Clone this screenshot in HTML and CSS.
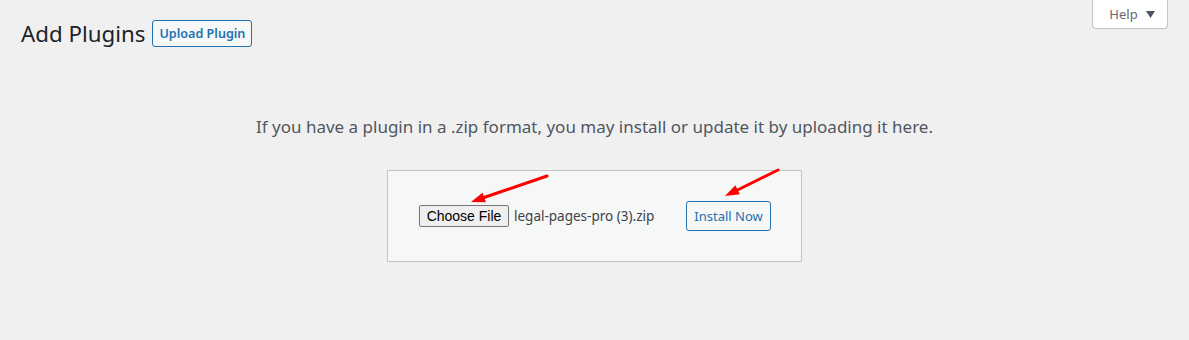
FILE: index.html
```html
<!DOCTYPE html>
<html lang="en">
<head>
  <meta charset="UTF-8" />
  <title>Add Plugins</title>
  <link rel="stylesheet" href="styles.css">
</head>
<body>
  <div class="wrap">
    <button class="help-tab">Help
      <svg class="caret" width="9" height="7" viewBox="0 0 9 7"><polygon points="0,0 9,0 4.5,7" fill="#50575e"/></svg>
    </button>
    <div class="title-row">
      <h1 class="page-title">Add Plugins</h1>
      <button class="title-action">Upload Plugin</button>
    </div>

    <p class="install-help">If you have a plugin in a .zip format, you may install or update it by uploading it here.</p>

    <div class="upload-row">
      <form class="upload-box">
        <span class="file-pick">
          <button type="button" class="file-btn">Choose File</button>
          <span class="file-name">legal-pages-pro (3).zip</span>
        </span>
        <button type="button" class="install-btn">Install Now</button>

        <svg class="arrows" width="420" height="60" viewBox="0 0 420 60">
          <line x1="160" y1="16" x2="97" y2="37.5" stroke="#f00" stroke-width="3" stroke-linecap="round"/>
          <polygon points="84,42 98.9,42.2 95.6,32.7" fill="#f00"/>
          <line x1="391" y1="10" x2="350.5" y2="30" stroke="#f00" stroke-width="3" stroke-linecap="round"/>
          <polygon points="338,36 352.8,34.3 348.4,25.3" fill="#f00"/>
        </svg>
      </form>
    </div>
  </div>
</body>
</html>
```

FILE: styles.css
```css
* { margin: 0; padding: 0; box-sizing: border-box; }
body {
  font-family: "Noto Sans", "Open Sans", sans-serif;
  font-size: 13px;
  background: #f0f0f1;
  color: #3c434a;
}
.wrap { padding: 0 21px 0 21px; }

.help-tab {
  float: right;
  display: flex;
  align-items: center;
  justify-content: center;
  gap: 8px;
  height: 29px;
  width: 76px;
  background: #fff;
  border: 1px solid #c3c4c7;
  border-top: none;
  border-radius: 0 0 4px 4px;
  color: #646970;
  font: 13px "Noto Sans", sans-serif;
  padding-left: 4px;
}

.title-row {
  display: flex;
  align-items: center;
  gap: 7px;
  padding-top: 20px;
}
.page-title {
  font-size: 22.3px;
  font-weight: 400;
  line-height: 27px;
  color: #1d2327;
}
.title-action {
  height: 27px;
  padding: 0 6px;
  background: #f6f7f7;
  border: 1px solid #2271b1;
  border-radius: 3px;
  color: #2271b1;
  font: 600 12.6px "Noto Sans", sans-serif;
}

.install-help {
  text-align: center;
  font-size: 17px;
  color: #50575e;
  margin-top: 68px;
}

.upload-row {
  display: flex;
  justify-content: center;
  margin-top: 32px;
}
.upload-box {
  position: relative;
  display: flex;
  align-items: center;
  padding: 30px;
  background: #f6f7f7;
  border: 1px solid #c3c4c7;
}
.file-pick {
  display: flex;
  align-items: center;
  gap: 5px;
  width: 268px;
  padding-left: 1px;
}
.file-btn {
  height: 22px;
  width: 90px;
  background: #efefef;
  border: 1px solid #767676;
  border-radius: 2px;
  color: #000;
  font: 14px "Liberation Sans", Arial, sans-serif;
}
.file-name {
  font: 13.5px "Noto Sans", sans-serif;
  color: #3c434a;
}
.install-btn {
  height: 30px;
  width: 85px;
  background: #f6f7f7;
  border: 1px solid #2271b1;
  border-radius: 3px;
  color: #2271b1;
  font: 13px "Noto Sans", sans-serif;
}
.arrows {
  position: absolute;
  left: -1px;
  top: -11px;
  overflow: visible;
}
```
